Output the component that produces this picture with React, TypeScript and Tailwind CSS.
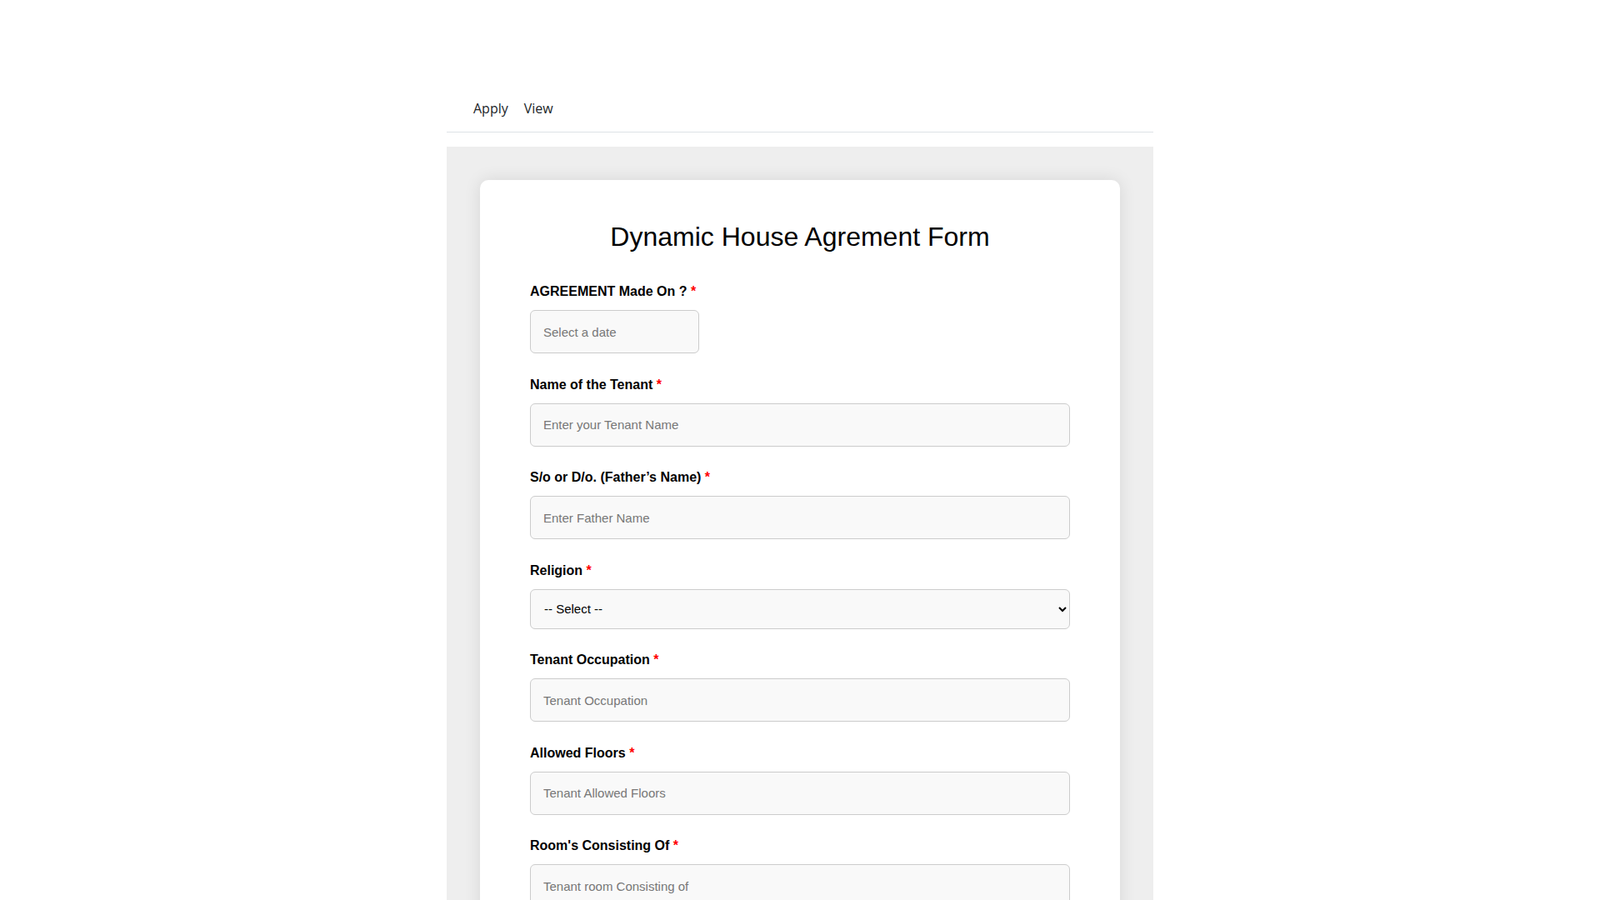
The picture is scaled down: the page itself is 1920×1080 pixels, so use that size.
import React from 'react';

const fields = [
  { label: 'Name of the Tenant', placeholder: 'Enter your Tenant Name' },
  { label: 'S/o or D/o. (Father’s Name)', placeholder: 'Enter Father Name' },
  { label: 'Religion', select: true },
  { label: 'Tenant Occupation', placeholder: 'Tenant Occupation' },
  { label: 'Allowed Floors', placeholder: 'Tenant Allowed Floors' },
  { label: "Room's Consisting Of", placeholder: 'Tenant room Consisting of' },
];

function Label({ text }: { text: string }) {
  return (
    <label className="block text-[16px] leading-[20px] font-bold text-black mb-3">
      {text} <span className="text-[#ff0000]">*</span>
    </label>
  );
}

const inputCls =
  'block h-[52px] px-[15px] text-[15px] text-black bg-[#f9f9f9] border border-[#cccccc] rounded-md outline-none placeholder:text-[#777777]';

export default function App() {
  return (
    <div className="min-h-screen bg-white font-['Liberation_Sans',Arial,sans-serif]">
      <div className="w-[848px] mx-auto">
        <nav className="pt-[118px] pb-[16px] pl-[32px] border-b border-[#dee2e6] flex gap-[19px] font-['Open_Sans',sans-serif] text-[16px] leading-[24px] text-[#212529]">
          <a href="#">Apply</a>
          <a href="#">View</a>
        </nav>
        <main className="mt-[17px] bg-[#eeeeee] px-10 pt-10 pb-10 min-h-[905px]">
          <div className="bg-white rounded-[10px] shadow-[0_0_20px_rgba(0,0,0,0.1)] px-[60px] pt-[48px] pb-10">
            <h1 className="text-center text-[32px] leading-[40px] text-black mb-[36px]">
              Dynamic House Agrement Form
            </h1>
            <div className="mb-[27.5px]">
              <Label text="AGREEMENT Made On ?" />
              <input className={inputCls + ' w-[203px]'} placeholder="Select a date" />
            </div>
            {fields.map((f) => (
              <div key={f.label} className="mb-[27.5px]">
                <Label text={f.label} />
                {f.select ? (
                  <select className="block w-full h-[48px] pl-[12px] pr-[6px] text-[15px] text-black bg-[#f9f9f9] border border-[#cccccc] rounded-md outline-none">
                    <option>-- Select --</option>
                    <option>Hindu</option>
                    <option>Muslim</option>
                    <option>Christian</option>
                    <option>Sikh</option>
                    <option>Other</option>
                  </select>
                ) : (
                  <input className={inputCls + ' w-full'} placeholder={f.placeholder} />
                )}
              </div>
            ))}
          </div>
        </main>
      </div>
    </div>
  );
}
